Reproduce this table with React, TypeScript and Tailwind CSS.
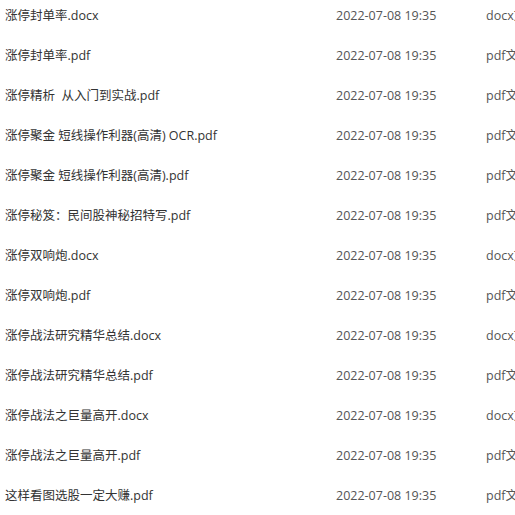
const files = [
  { name: '涨停封单率.docx', type: 'docx文档' },
  { name: '涨停封单率.pdf', type: 'pdf文件' },
  { name: '涨停精析  从入门到实战.pdf', type: 'pdf文件' },
  { name: '涨停聚金 短线操作利器(高清) OCR.pdf', type: 'pdf文件' },
  { name: '涨停聚金 短线操作利器(高清).pdf', type: 'pdf文件' },
  { name: '涨停秘笈：民间股神秘招特写.pdf', type: 'pdf文件' },
  { name: '涨停双响炮.docx', type: 'docx文档' },
  { name: '涨停双响炮.pdf', type: 'pdf文件' },
  { name: '涨停战法研究精华总结.docx', type: 'docx文档' },
  { name: '涨停战法研究精华总结.pdf', type: 'pdf文件' },
  { name: '涨停战法之巨量高开.docx', type: 'docx文档' },
  { name: '涨停战法之巨量高开.pdf', type: 'pdf文件' },
  { name: '这样看图选股一定大赚.pdf', type: 'pdf文件' },
]

export default function App() {
  return (
    <div className="h-[515px] w-[515px] overflow-hidden bg-white font-['Open_Sans','Noto_Sans_CJK_SC',sans-serif] text-[12.5px]">
      <div className="-mt-1">
        {files.map((f) => (
          <div key={f.name} className="flex h-10 items-center whitespace-pre">
            <div className="w-[336px] shrink-0 pl-[5px] text-[#333]">{f.name}</div>
            <div className="w-[150px] shrink-0 text-[#555]">2022-07-08 19:35</div>
            <div className="shrink-0 text-[#555]">{f.type}</div>
          </div>
        ))}
      </div>
    </div>
  )
}
